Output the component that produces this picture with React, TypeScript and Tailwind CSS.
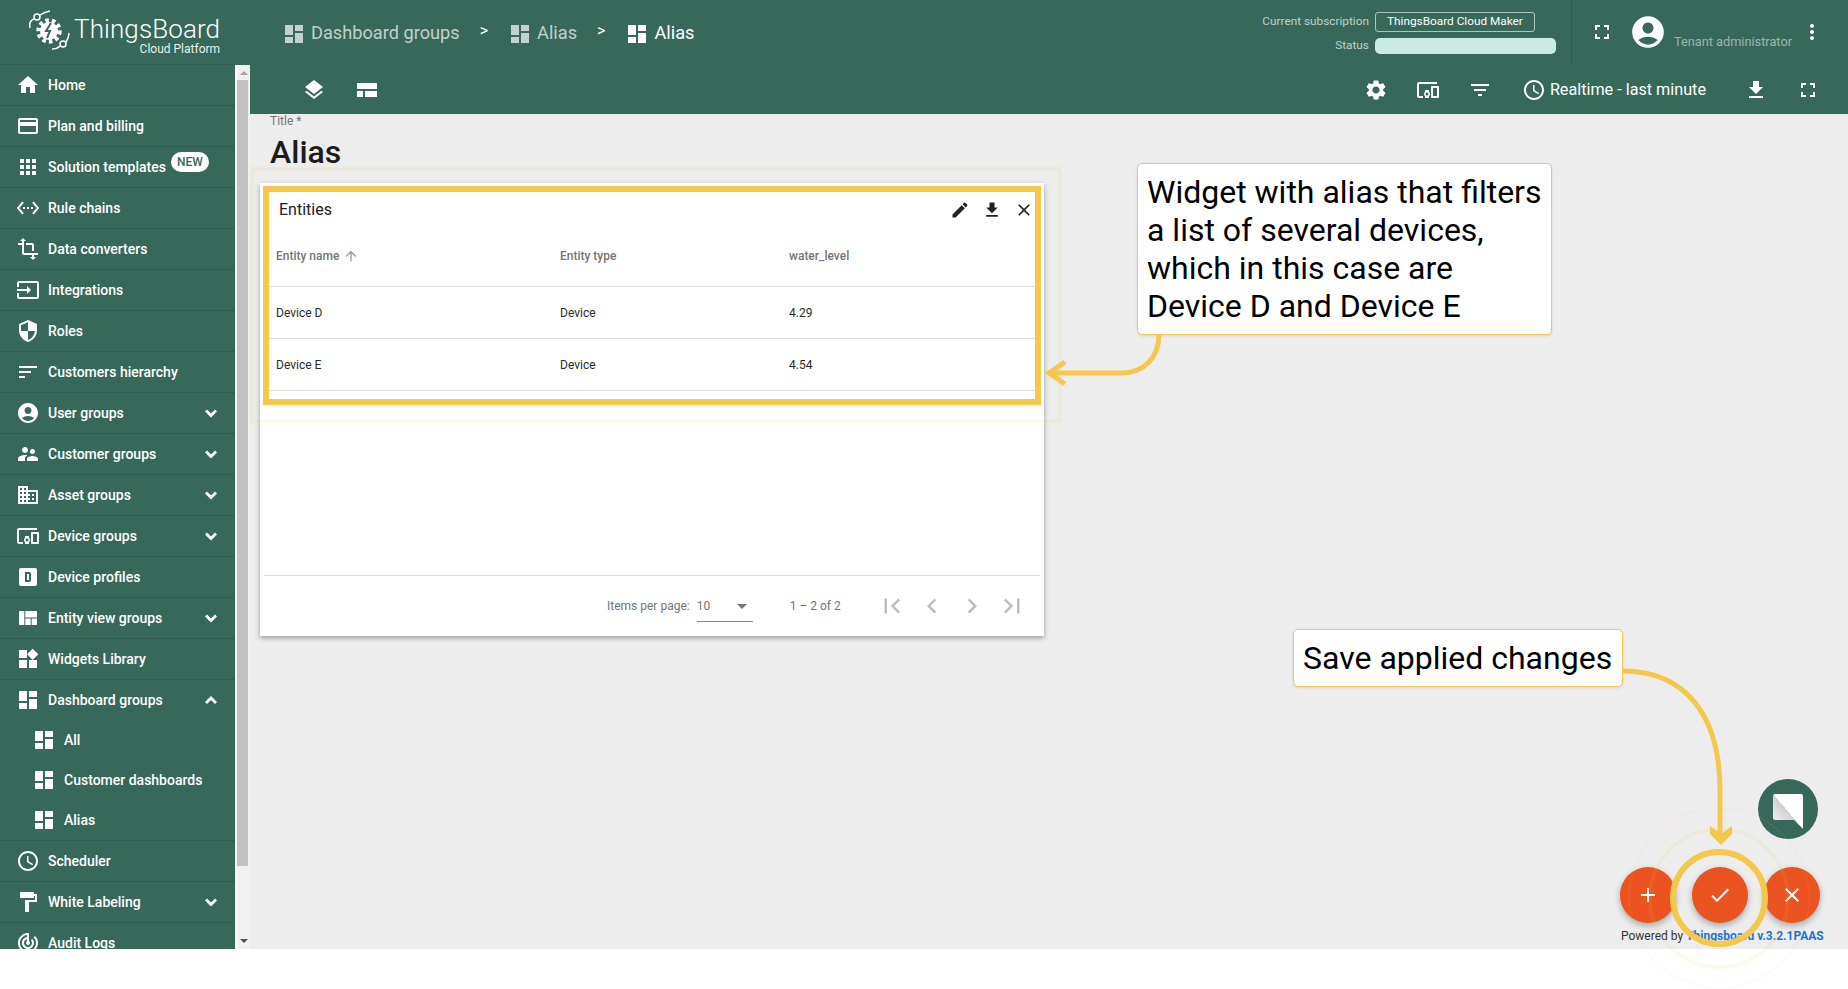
import React from 'react';
import {
  MdHome, MdCreditCard, MdApps, MdSettingsEthernet, MdTransform, MdInput, MdSecurity, MdSort,
  MdAccountCircle, MdSupervisorAccount, MdDomain, MdDevicesOther, MdViewQuilt, MdWidgets, MdDashboard,
  MdSchedule, MdFormatPaint, MdTrackChanges, MdLayers,
  MdSettings, MdFilterList, MdFileDownload, MdFullscreen, MdMoreVert, MdEdit, MdClose,
  MdArrowUpward, MdFirstPage, MdLastPage, MdChevronLeft, MdChevronRight, MdAdd, MdCheck, MdArrowDropDown,
} from 'react-icons/md';

type IconType = React.ComponentType<{ size?: number; className?: string }>;

function DeviceProfileIcon({ size = 24 }: { size?: number }) {
  return (
    <svg width={size} height={size} viewBox="0 0 24 24" fill="currentColor">
      <path
        fillRule="evenodd"
        d="M5 3h14a2 2 0 0 1 2 2v14a2 2 0 0 1-2 2H5a2 2 0 0 1-2-2V5a2 2 0 0 1 2-2zm4 4v10h4a2 2 0 0 0 2-2V9a2 2 0 0 0-2-2H9zm2 2h2v6h-2V9z"
      />
    </svg>
  );
}

function Chevron({ up }: { up?: boolean }) {
  return (
    <svg width="24" height="24" viewBox="0 0 24 24" fill="none" stroke="currentColor" strokeWidth="2.8" className="ml-auto">
      <path d={up ? 'M7 15l5-5 5 5' : 'M7 9.500l5 5 5-5'} />
    </svg>
  );
}

const navItems: { label: string; icon: IconType; arrow?: boolean; badge?: boolean }[] = [
  { label: 'Home', icon: MdHome },
  { label: 'Plan and billing', icon: MdCreditCard },
  { label: 'Solution templates', icon: MdApps, badge: true },
  { label: 'Rule chains', icon: MdSettingsEthernet },
  { label: 'Data converters', icon: MdTransform },
  { label: 'Integrations', icon: MdInput },
  { label: 'Roles', icon: MdSecurity },
  { label: 'Customers hierarchy', icon: MdSort },
  { label: 'User groups', icon: MdAccountCircle, arrow: true },
  { label: 'Customer groups', icon: MdSupervisorAccount, arrow: true },
  { label: 'Asset groups', icon: MdDomain, arrow: true },
  { label: 'Device groups', icon: MdDevicesOther, arrow: true },
  { label: 'Device profiles', icon: DeviceProfileIcon },
  { label: 'Entity view groups', icon: MdViewQuilt, arrow: true },
  { label: 'Widgets Library', icon: MdWidgets },
];

const navAfter: { label: string; icon: IconType; arrow?: boolean }[] = [
  { label: 'Scheduler', icon: MdSchedule },
  { label: 'White Labeling', icon: MdFormatPaint, arrow: true },
  { label: 'Audit Logs', icon: MdTrackChanges },
];

function NavRow({ label, icon: Icon, arrow, badge }: { label: string; icon: IconType; arrow?: boolean; badge?: boolean }) {
  return (
    <div className="flex h-[41px] shrink-0 items-center gap-2 border-b border-[#2e5c4e] pl-4 pr-3 text-white">
      <Icon size={24} />
      <span className="text-sm font-medium">{label}</span>
      {badge && (
        <span className="mb-[11px] -ml-[3px] rounded-full bg-white px-[6px] text-xs leading-[20px] font-medium text-[#36695a]">
          NEW
        </span>
      )}
      {arrow && <Chevron />}
    </div>
  );
}

function Logo() {
  return (
    <svg width="44" height="44" viewBox="0 0 44 44" fill="none" stroke="white">
      <circle cx="20" cy="21" r="9" fill="white" stroke="none" />
      <circle cx="20" cy="21" r="10.5" strokeWidth="4.5" strokeDasharray="3.5 3" />
      <path d="M22 13l-5 8h4l-3 7" stroke="#36695a" strokeWidth="2" />
      <path d="M1 18C0 13 2 10 5 9M11 5C14 3 17 2 21 1" strokeWidth="1.5" />
      <circle cx="8" cy="7" r="3" strokeWidth="1.5" />
      <path d="M23 39C26 39 29 38 31 36M37 32C39 29 40 26 40 23" strokeWidth="1.5" />
      <circle cx="34" cy="34" r="3" strokeWidth="1.5" />
    </svg>
  );
}

function Sidebar() {
  return (
    <aside className="flex w-[250px] shrink-0 flex-col bg-[#36695a]">
      <div className="relative h-[65px] w-[235px] shrink-0 border-b border-[#2e5c4e]">
        <div className="absolute left-[29px] top-[10px]">
          <Logo />
        </div>
        <div className="absolute left-[74px] top-[14px] flex flex-col items-end text-white">
          <span className="text-[26px] leading-[30px] font-light tracking-[0.1px]">ThingsBoard</span>
          <span className="-mt-[2px] text-xs leading-[14px] opacity-90">Cloud Platform</span>
        </div>
      </div>
      <div className="flex min-h-0 flex-1">
        <nav className="flex w-[235px] flex-col overflow-hidden">
          {navItems.map((it) => (
            <NavRow key={it.label} {...it} />
          ))}
          <div className="flex h-[40px] shrink-0 items-center gap-2 pl-4 pr-3 text-white">
            <MdDashboard size={24} />
            <span className="text-sm font-medium">Dashboard groups</span>
            <Chevron up />
          </div>
          {['All', 'Customer dashboards', 'Alias'].map((s) => (
            <div key={s} className="flex h-[40px] shrink-0 items-center gap-2 pl-8 text-white">
              <MdDashboard size={24} />
              <span className="text-sm font-medium">{s}</span>
            </div>
          ))}
          <div className="border-t border-[#2e5c4e]" />
          {navAfter.map((it) => (
            <NavRow key={it.label} {...it} />
          ))}
        </nav>
        <div className="flex w-[15px] flex-col items-center border-l-2 border-white bg-[#f1f1f1]">
          <div className="flex h-[15px] items-center justify-center">
            <div className="h-0 w-0 border-x-[4px] border-b-[4px] border-x-transparent border-b-[#a3a3a3]" />
          </div>
          <div className="mr-[2px] h-[786px] w-[11px] bg-[#c1c1c1]" />
          <div className="mt-auto flex h-[15px] items-center justify-center pb-[1px]">
            <div className="h-0 w-0 border-x-[4px] border-t-[4px] border-x-transparent border-t-[#505050]" />
          </div>
        </div>
      </div>
    </aside>
  );
}

function Header() {
  return (
    <header className="shrink-0 bg-[#36695a] text-white">
      <div className="flex h-[64px] items-center">
        <div className="ml-[32px] mt-[3px] flex items-center text-[18.2px] leading-none">
          <span className="flex items-center gap-[5px] text-white/70">
            <MdDashboard size={24} />
            Dashboard groups
          </span>
          <span className="mx-[20px] -mt-[6px] text-base">&gt;</span>
          <span className="flex items-center gap-[5px] text-white/70">
            <MdDashboard size={24} />
            Alias
          </span>
          <span className="mx-[20px] -mt-[6px] text-base">&gt;</span>
          <span className="flex items-center gap-[5px]">
            <MdDashboard size={24} />
            Alias
          </span>
        </div>
        <div className="ml-auto mt-[2px] grid grid-cols-[auto_181px] items-center gap-x-[6px] gap-y-[5px] text-[11.8px] text-white/70">
          <span className="text-right">Current subscription</span>
          <span className="flex h-[20px] w-[160px] items-center justify-center rounded-[3px] border border-white/60 text-white">
            ThingsBoard Cloud Maker
          </span>
          <span className="text-right">Status</span>
          <span className="h-[16px] rounded-[5px] bg-[#c8ebe2]" />
        </div>
        <div className="ml-[15px] flex h-full items-center border-l border-[#2e5c4e] pl-[18px] pr-[24px]">
          <MdFullscreen size={24} />
          <MdAccountCircle size={38} className="ml-[15px]" />
          <span className="ml-[7px] mt-[20px] text-[12.75px] text-white/50">Tenant administrator</span>
          <MdMoreVert size={24} className="ml-[8px]" />
        </div>
      </div>
      <div className="flex h-[50px] items-center pt-[2px]">
        <div className="ml-[52px] flex items-center gap-[31px]">
          <MdLayers size={24} />
          <svg width="20" height="14" viewBox="0 0 20 14" fill="currentColor">
            <path d="M0 0h20v6H0zM0 8h6v6H0zM8 8h12v6H8z" />
          </svg>
        </div>
        <div className="ml-auto flex items-center pr-[28px]">
          <MdSettings size={24} />
          <MdDevicesOther size={24} className="ml-[28px]" />
          <MdFilterList size={24} className="ml-[28px]" />
          <MdSchedule size={24} className="ml-[30px]" />
          <span className="ml-[4px] text-[16.2px]">Realtime - last minute</span>
          <MdFileDownload size={24} className="ml-[38px]" />
          <MdFullscreen size={24} className="ml-[28px]" />
        </div>
      </div>
    </header>
  );
}

function EntityRow({ name, value }: { name: string; value: string }) {
  return (
    <div className="flex h-[52px] items-center border-b border-[#dcdcdc] text-xs text-[#2a2a2a]">
      <span className="w-[296px] pl-[12px]">{name}</span>
      <span className="w-[229px]">Device</span>
      <span>{value}</span>
    </div>
  );
}

function Widget() {
  return (
    <section className="relative ml-[10px] mt-[9px] flex h-[453px] w-[784px] flex-col bg-white px-[4px] pt-[3px] shadow-[0_2px_5px_rgba(0,0,0,0.35)]">
      <div className="flex h-[47px] items-center pl-[15px] pr-[6px] text-[#222]">
        <span className="text-base">Entities</span>
        <MdEdit size={20} className="ml-auto" />
        <MdFileDownload size={20} className="ml-[12px]" />
        <MdClose size={20} className="ml-[12px]" />
      </div>
      <div className="flex h-[54px] items-center border-b border-[#dcdcdc] pb-[8px] text-xs font-medium text-[#757575]">
        <span className="flex w-[296px] items-center gap-[4px] pl-[12px]">
          Entity name <MdArrowUpward size={16} className="text-[#9a9a9a]" />
        </span>
        <span className="w-[229px]">Entity type</span>
        <span>water_level</span>
      </div>
      <EntityRow name="Device D" value="4.29" />
      <EntityRow name="Device E" value="4.54" />
      <div className="mt-auto flex h-[61px] items-center border-t border-[#dcdcdc] text-xs text-[#757575]">
        <span className="ml-[343px]">Items per page:</span>
        <span className="relative ml-[7px] flex h-[32px] w-[56px] items-center border-b border-[#8a8a8a]">
          10
          <MdArrowDropDown size={24} className="absolute -right-[1px] top-[4px] text-[#757575]" />
        </span>
        <span className="ml-[37px]">1 – 2 of 2</span>
        <span className="ml-[36px] flex items-center gap-[10px] text-[#bdbdbd]">
          <MdFirstPage size={30} />
          <MdChevronLeft size={30} />
          <MdChevronRight size={30} />
          <MdLastPage size={30} />
        </span>
      </div>
      <div className="absolute left-[3px] top-[3px] h-[219px] w-[778px] border-[6px] border-[#f4c84d]" />
      <div className="absolute -left-[10px] -top-[16px] h-[256px] w-[812px] border-[4px] border-[#f4c84d]/10" />
    </section>
  );
}

function Annotation({ className, children }: { className: string; children: React.ReactNode }) {
  return (
    <div className={`absolute whitespace-nowrap rounded-[5px] border border-[#f4c84d] bg-white px-[9px] text-[32px] leading-[38px] text-black shadow-[0_1px_3px_rgba(0,0,0,0.1)] ${className}`}>
      {children}
    </div>
  );
}

function Arrows() {
  return (
    <svg className="pointer-events-none absolute left-0 top-0" width="1848" height="989" fill="none" stroke="#f4c84d">
      <path d="M1159 334C1159 358 1144 373 1121 373L1050 373" strokeWidth="5" />
      <path d="M1065 362L1049 373L1065 384" strokeWidth="5" />
      <path d="M1623 671C1685 671 1720 715 1720 790L1720 836" strokeWidth="5" />
      <path d="M1710 826L1721 834L1732 826L1732 834L1721 845L1710 834Z" fill="#f4c84d" stroke="none" />
      <circle cx="1719" cy="898" r="46" strokeWidth="6" />
      <circle cx="1719" cy="898" r="69" strokeWidth="4" opacity="0.1" />
      <circle cx="1719" cy="898" r="90" strokeWidth="2" opacity="0.07" />
    </svg>
  );
}

function Fab({ children }: { children: React.ReactNode }) {
  return (
    <div className="flex h-[56px] w-[56px] items-center justify-center rounded-full bg-[#eb5420] text-white shadow-[0_3px_6px_rgba(0,0,0,0.3)]">
      {children}
    </div>
  );
}

export default function App() {
  return (
    <div className="relative h-[989px] w-[1848px] overflow-hidden bg-white font-['Roboto',sans-serif]">
      <div className="flex h-[949px]">
        <Sidebar />
        <main className="flex min-w-0 flex-1 flex-col bg-[#ededed]">
          <Header />
          <div className="ml-[20px] text-xs leading-[14px] text-[#757575]">Title *</div>
          <h1 className="ml-[20px] mt-[2px] text-[32px] leading-[44px] font-medium text-[#1c1c1c]">Alias</h1>
          <Widget />
        </main>
      </div>

      <Annotation className="left-[1137px] top-[163px] h-[172px] w-[415px] pt-[9px]">
        Widget with alias that filters
        <br />
        a list of several devices,
        <br />
        which in this case are
        <br />
        Device D and Device E
      </Annotation>
      <Annotation className="left-[1293px] top-[629px] h-[58px] w-[330px] pt-[9px]">Save applied changes</Annotation>

      <div className="absolute left-[1758px] top-[779px] flex h-[60px] w-[60px] items-center justify-center rounded-full bg-[#36695a]">
        <svg width="30" height="35" viewBox="0 0 30 35" className="mt-[5px]">
          <defs>
            <linearGradient id="chat" x1="1" y1="0" x2="0" y2="1">
              <stop offset="0.5" stopColor="#ffffff" />
              <stop offset="0.5" stopColor="#cfcfcf" />
              <stop offset="1" stopColor="#ffffff" />
            </linearGradient>
          </defs>
          <path d="M2 0h26a2 2 0 0 1 2 2v33l-9-9H2a2 2 0 0 1-2-2V2a2 2 0 0 1 2-2z" fill="url(#chat)" />
        </svg>
      </div>

      <div className="absolute left-[1620px] top-[867px] flex gap-[16px]">
        <Fab><MdAdd size={24} /></Fab>
        <Fab><MdCheck size={24} /></Fab>
        <Fab><MdClose size={24} /></Fab>
      </div>
      <div className="absolute left-[1621px] top-[929px] text-xs leading-[14px] text-[#333]">
        Powered by <span className="font-bold text-[#1976d2]">Thingsboard v.3.2.1PAAS</span>
      </div>

      <Arrows />
    </div>
  );
}
